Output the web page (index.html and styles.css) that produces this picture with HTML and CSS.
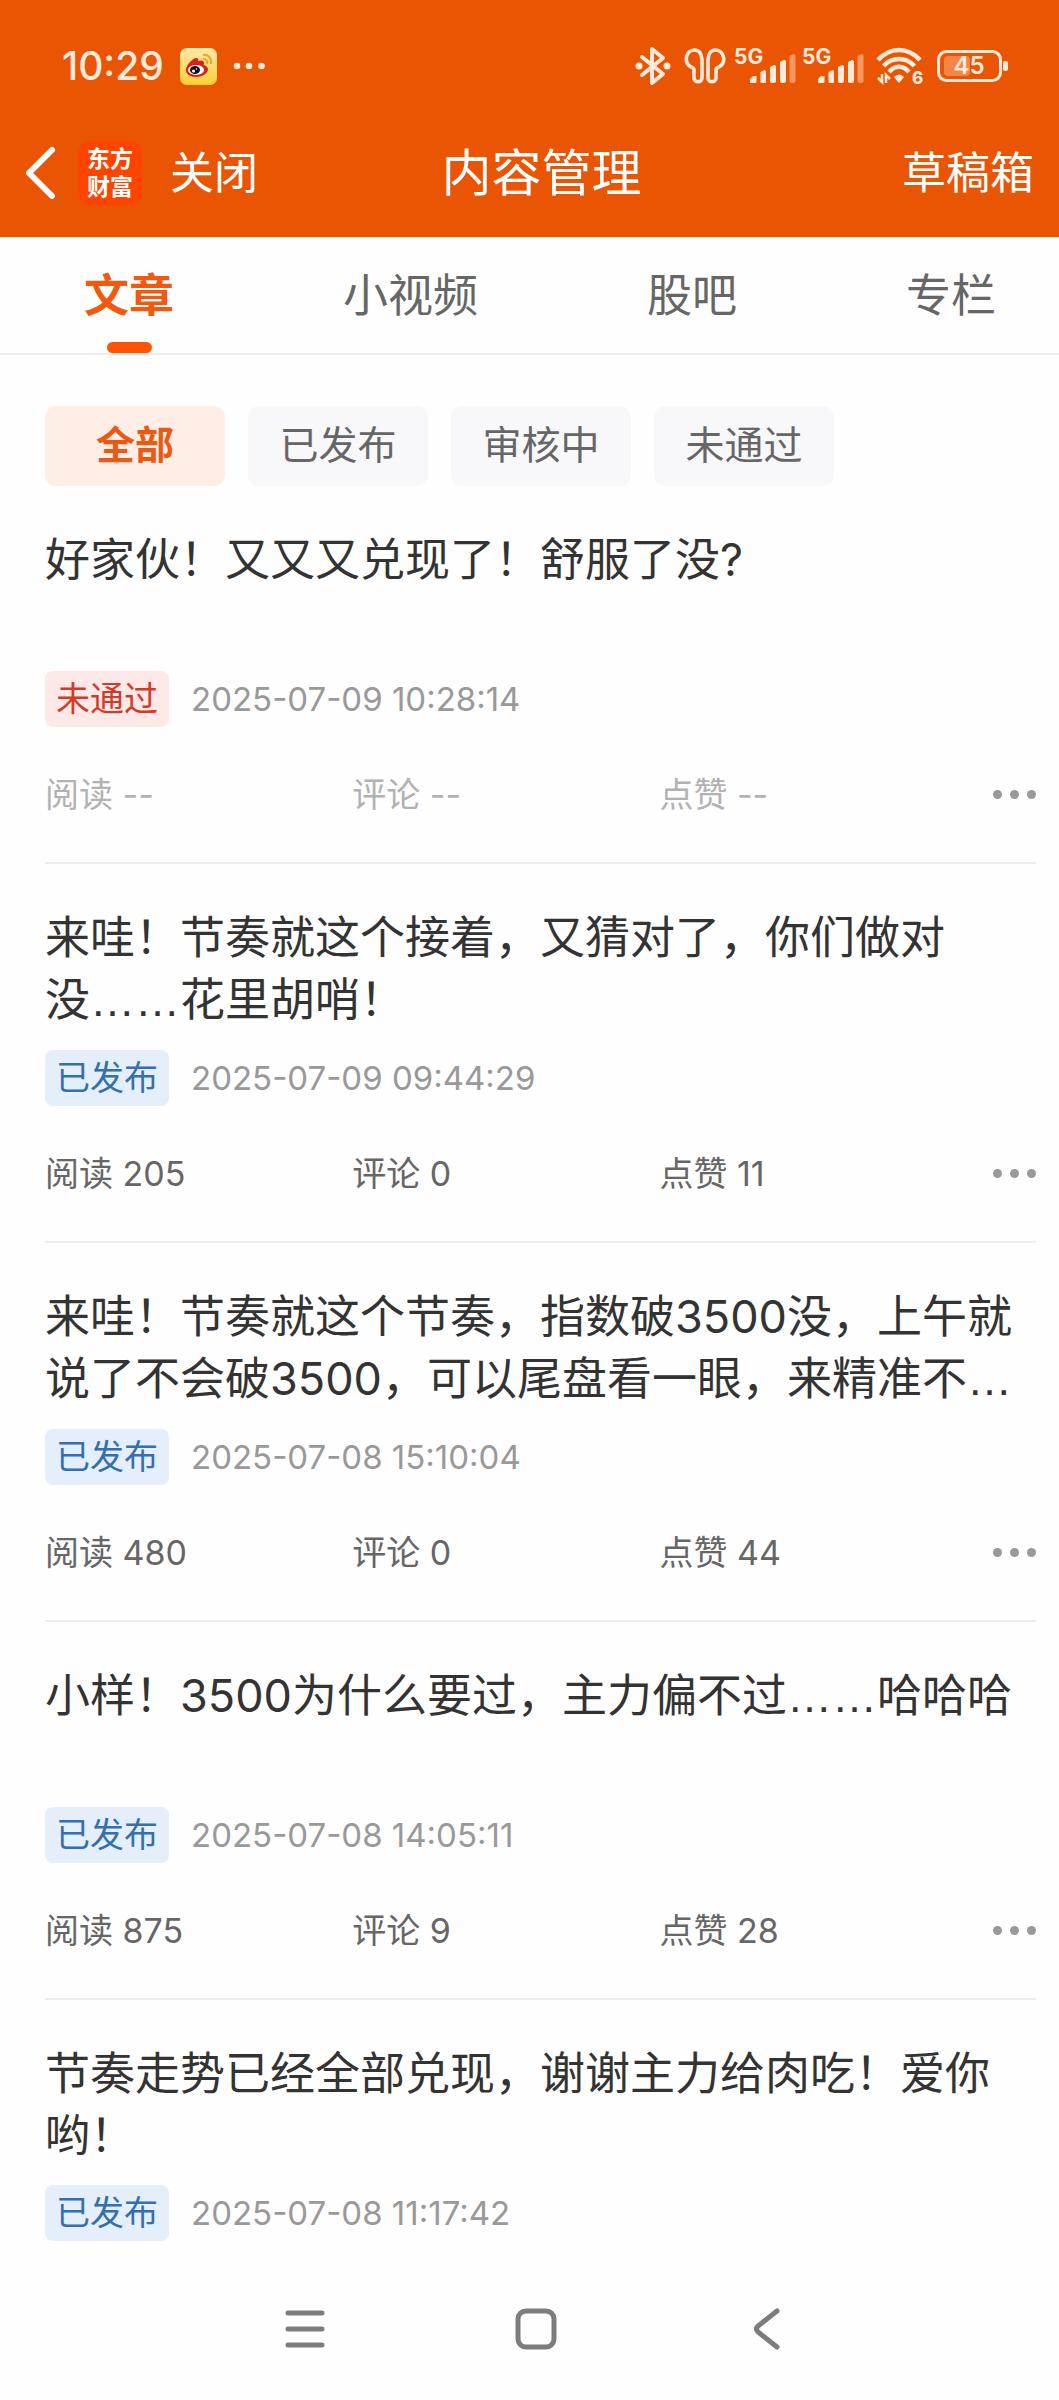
FILE: index.html
```html
<!DOCTYPE html>
<html lang="zh-CN">
<head>
    <meta charset="UTF-8">
    <meta name="viewport" content="width=device-width, initial-scale=1.0">
    <title>内容管理</title>
    <link rel="stylesheet" href="styles.css">
</head>
<body>
    <header class="header">
        <div class="status-bar">
            <div class="status-left">
                <span class="time">10:29</span>
                <svg class="weibo" width="37" height="37" viewBox="0 0 37 37">
                    <defs>
                        <linearGradient id="weibo-bg" x1="0" y1="0" x2="0" y2="1">
                            <stop offset="0" stop-color="#ffe9a8"/>
                            <stop offset="1" stop-color="#ffcf33"/>
                        </linearGradient>
                    </defs>
                    <rect width="37" height="37" rx="7" fill="url(#weibo-bg)"/>
                    <path d="M6 22c0-5 6-11 10-12 2 0 3 1 2 3 3-1 6-1 6 2 0 1-1 2 0 2 2 1 4 2 4 4 0 4-5 8-12 8-6 0-10-3-10-7z" fill="#d9201c"/>
                    <ellipse cx="16" cy="22" rx="8" ry="5" fill="#fff"/>
                    <ellipse cx="15" cy="22" rx="5" ry="4" fill="#111"/>
                    <circle cx="13.500" cy="23" r="1.500" fill="#fff"/>
                    <circle cx="16.500" cy="21" r="0.800" fill="#fff"/>
                    <path d="M23 7c5-1 9 3 8 9M23 11c3 0 5 2 4 5" fill="none" stroke="#e9a62c" stroke-width="2"/>
                </svg>
                <svg width="32" height="8" viewBox="0 0 32 8" fill="#ffe9db">
                    <circle cx="4" cy="4" r="3.300"/>
                    <circle cx="16" cy="4" r="3.300"/>
                    <circle cx="28.500" cy="4" r="3.300"/>
                </svg>
            </div>
            <div class="status-right">
                <svg class="bluetooth" width="36" height="40" viewBox="0 0 36 40">
                    <path d="M7 11l21 17-11 9V3l11 9L7 29" fill="none" stroke="#ffe9db" stroke-width="4" stroke-linejoin="round" stroke-linecap="round"/>
                    <circle cx="4" cy="20" r="3.500" fill="#ffe9db"/>
                    <circle cx="32" cy="20" r="3.500" fill="#ffe9db"/>
                </svg>
                <svg class="buds" width="42" height="36" viewBox="0 0 42 36" fill="none" stroke="#ffe9db" stroke-width="3.600" stroke-linejoin="round">
                    <path d="M18 12v18c0 5-8 5-8 0v-8c0-2-1-2-3-3-8-5-5-17 4-17 4 0 7 4 7 10z"/>
                    <path d="M24 12v18c0 5 8 5 8 0v-8c0-2 1-2 3-3 8-5 5-17-4-17-4 0-7 4-7 10z"/>
                </svg>
                <svg class="signal" width="62" height="52" viewBox="0 -8 62 52" fill="#ffe9db">
                    <text x="0" y="16" class="signal-text">5G</text>
                    <path d="M16 34v-3l3-3h3.500v6c0 1-1 1-1 1h-4.500c-1 0-1 0-1-1zM26.500 24l4-2q1.500 0 1.500 1.500V35h-4.500q-1 0-1-1zM36 19l4-2q2 0 2 1.500V33q0 2-2 2h-2q-2 0-2-2zM46 14l4-2q2 0 2 1.500V33q0 2-2 2h-2q-2 0-2-2z"/>
                    <path d="M55.500 8l4-2q2 0 2 1.500V33q0 2-2 2h-2q-2 0-2-2z" fill="#ff945c"/>
                </svg>
                <svg class="signal" width="62" height="52" viewBox="0 -8 62 52" fill="#ffe9db">
                    <text x="0" y="16" class="signal-text">5G</text>
                    <path d="M16 34v-3l3-3h3.500v6c0 1-1 1-1 1h-4.500c-1 0-1 0-1-1zM26.500 24l4-2q1.500 0 1.500 1.500V35h-4.500q-1 0-1-1zM36 19l4-2q2 0 2 1.500V33q0 2-2 2h-2q-2 0-2-2zM46 14l4-2q2 0 2 1.500V33q0 2-2 2h-2q-2 0-2-2z"/>
                    <path d="M55.500 8l4-2q2 0 2 1.500V33q0 2-2 2h-2q-2 0-2-2z" fill="#ff945c"/>
                </svg>
                <svg class="wifi" width="48" height="52" viewBox="0 -7 48 52">
                    <g fill="none" stroke="#ffe9db" stroke-width="4.500">
                        <path d="M2 13C14-.500 32-.500 44 13"/>
                        <path d="M7.500 19C16 9.500 30 9.500 38.500 19"/>
                        <path d="M13 25C19 18 27 18 33 25"/>
                    </g>
                    <path d="M18 30q5-5 10 0l-4 5q-1 1-2 0z" fill="#ffe9db"/>
                    <path d="M2 31l4 4V27M10 36V28l4 4" fill="none" stroke="#ffe9db" stroke-width="2.500"/>
                    <text x="36" y="37" class="wifi-text">6</text>
                </svg>
                <svg class="battery" width="72" height="32" viewBox="0 0 72 32">
                    <rect x="1.500" y="1.500" width="62" height="29" rx="8" fill="none" stroke="#ffe9db" stroke-width="3"/>
                    <rect x="7" y="6" width="26" height="20" rx="4" fill="#f58448"/>
                    <rect x="66" y="11" width="5" height="10" rx="2" fill="#ffe9db"/>
                    <text x="32" y="24" text-anchor="middle" class="battery-text">45</text>
                </svg>
            </div>
        </div>
        <nav class="title-bar">
            <div class="title-left">
                <button class="back" aria-label="返回">
                    <svg width="32" height="54" viewBox="0 0 32 54"><path d="M28 4L5 27l23 23" fill="none" stroke="#fff" stroke-width="6" stroke-linejoin="round" stroke-linecap="round"/></svg>
                </button>
                <span class="logo">东方<br>财富</span>
                <a class="bar-link" href="#">关闭</a>
            </div>
            <h1>内容管理</h1>
            <a class="bar-link drafts" href="#">草稿箱</a>
        </nav>
    </header>

    <nav class="tabs">
        <button class="tab active">文章</button>
        <button class="tab">小视频</button>
        <button class="tab">股吧</button>
        <button class="tab">专栏</button>
    </nav>

    <main class="content">
        <div class="filters">
            <button class="filter active">全部</button>
            <button class="filter">已发布</button>
            <button class="filter">审核中</button>
            <button class="filter">未通过</button>
        </div>

        <article class="post">
            <h2>好家伙！又又又兑现了！舒服了没?</h2>
            <div class="meta">
                <span class="badge rejected">未通过</span>
                <time>2025-07-09 10:28:14</time>
            </div>
            <div class="stats empty">
                <span>阅读 --</span>
                <span>评论 --</span>
                <span>点赞 --</span>
                <button class="more" aria-label="更多"><i></i><i></i><i></i></button>
            </div>
        </article>

        <article class="post">
            <h2>来哇！节奏就这个接着，又猜对了，你们做对没<span class="dots">……</span>花里胡哨！</h2>
            <div class="meta">
                <span class="badge">已发布</span>
                <time>2025-07-09 09:44:29</time>
            </div>
            <div class="stats">
                <span>阅读 205</span>
                <span>评论 0</span>
                <span>点赞 11</span>
                <button class="more" aria-label="更多"><i></i><i></i><i></i></button>
            </div>
        </article>

        <article class="post">
            <h2>来哇！节奏就这个节奏，指数破3500没，上午就说了不会破3500，可以尾盘看一眼，来精准不<span class="dots">…</span></h2>
            <div class="meta">
                <span class="badge">已发布</span>
                <time>2025-07-08 15:10:04</time>
            </div>
            <div class="stats">
                <span>阅读 480</span>
                <span>评论 0</span>
                <span>点赞 44</span>
                <button class="more" aria-label="更多"><i></i><i></i><i></i></button>
            </div>
        </article>

        <article class="post">
            <h2>小样！3500为什么要过，主力偏不过<span class="dots">……</span>哈哈哈</h2>
            <div class="meta">
                <span class="badge">已发布</span>
                <time>2025-07-08 14:05:11</time>
            </div>
            <div class="stats">
                <span>阅读 875</span>
                <span>评论 9</span>
                <span>点赞 28</span>
                <button class="more" aria-label="更多"><i></i><i></i><i></i></button>
            </div>
        </article>

        <article class="post">
            <h2>节奏走势已经全部兑现，谢谢主力给肉吃！爱你哟！</h2>
            <div class="meta">
                <span class="badge">已发布</span>
                <time>2025-07-08 11:17:42</time>
            </div>
        </article>
    </main>

    <footer class="system-nav">
        <button aria-label="菜单">
            <svg width="42" height="42" viewBox="0 0 42 42"><path d="M4 5h34M4 21h34M4 37h34" stroke="#7c7c7c" stroke-width="5" stroke-linecap="round"/></svg>
        </button>
        <button aria-label="主页">
            <svg width="42" height="42" viewBox="0 0 42 42"><rect x="3" y="3" width="36" height="36" rx="8" fill="none" stroke="#7c7c7c" stroke-width="5"/></svg>
        </button>
        <button aria-label="后退">
            <svg width="42" height="42" viewBox="0 0 42 42"><path d="M31 3L12 18Q9 21 12 24L31 39" fill="none" stroke="#7c7c7c" stroke-width="5" stroke-linecap="round"/></svg>
        </button>
    </footer>
</body>
</html>
```
FILE: styles.css
```css
* {
    box-sizing: border-box;
}
body {
    margin: 0;
    background-color: #fefefe;
    color: #333;
    font-family: Inter, "Noto Sans CJK SC", sans-serif;
}
button {
    padding: 0;
    border: none;
    background: none;
    color: inherit;
    font-family: inherit;
    cursor: pointer;
}
svg {
    display: block;
}
h1, h2 {
    margin: 0;
    font-weight: 400;
}

/* header */
.header {
    background-color: #ea5504;
    color: #fff;
}
.status-bar {
    display: flex;
    justify-content: space-between;
    align-items: center;
    height: 112px;
    padding: 20px 50px 0 62px;
}
.status-left, .status-right {
    display: flex;
    align-items: center;
}
.time {
    color: #ffe9db;
    font-size: 39px;
    font-weight: 500;
    line-height: 48px;
}
.weibo {
    margin: 0 16px;
}
.bluetooth, .wifi {
    margin-right: 13px;
}
.buds {
    margin-right: 8px;
}
.signal {
    margin-right: 6px;
}
.wifi {
    margin-left: 6px;
}
.signal-text {
    font-size: 21px;
    font-weight: 700;
}
.wifi-text {
    fill: #ffe9db;
    font-size: 17px;
    font-weight: 800;
}
.battery-text {
    fill: #ffe9db;
    font-size: 24px;
    font-weight: 600;
}
.title-bar {
    display: grid;
    grid-template-columns: 1fr auto 1fr;
    align-items: center;
    height: 125px;
    padding: 0 0 4px 24px;
}
.title-bar h1 {
    font-size: 50px;
    line-height: 64px;
}
.title-left {
    display: flex;
    align-items: center;
}
.logo {
    width: 64px;
    height: 64px;
    margin: 0 28px 0 22px;
    padding-top: 4px;
    border-radius: 12px;
    background-color: #ff4400;
    font-size: 23px;
    font-weight: 700;
    line-height: 28px;
    text-align: center;
}
.bar-link {
    color: #fff;
    font-size: 44px;
    line-height: 64px;
    text-decoration: none;
}
.drafts {
    justify-self: end;
    margin-right: 25px;
}

/* tabs */
.tabs {
    display: flex;
    justify-content: space-between;
    padding: 27px 63px 0 84px;
    border-bottom: 2px solid #ededed;
}
.tab {
    color: #666;
    font-size: 45px;
    line-height: 64px;
}
.tab::after {
    content: "";
    display: block;
    width: 45px;
    height: 11px;
    margin: 14px auto 0;
    border-radius: 6px;
}
.tab.active {
    color: #f0590f;
    font-weight: 700;
}
.tab.active::after {
    background-color: #ff5500;
}

/* filters */
.content {
    padding: 51px 23px 0 45px;
}
.filters {
    display: flex;
    gap: 23px;
}
.filter {
    width: 180px;
    height: 80px;
    padding-bottom: 8px;
    border-radius: 11px;
    background-color: #f8f8fb;
    color: #666;
    font-size: 39px;
}
.filter.active {
    background-color: #ffeee6;
    color: #ea5a14;
    font-weight: 700;
}

/* posts */
.post {
    padding: 43px 0 42px;
    border-bottom: 2px solid #ededed;
}
.post:last-child {
    border-bottom: none;
}
.post h2 {
    min-height: 124px;
    font-size: 45px;
    line-height: 62px;
}
.dots {
    font-family: "Liberation Sans", sans-serif;
}
.meta {
    display: flex;
    align-items: center;
    gap: 22px;
    margin-top: 18px;
}
.badge {
    padding: 0 11px;
    border-radius: 8px;
    background-color: #e4effb;
    color: #346fae;
    font-size: 34px;
    line-height: 56px;
}
.badge.rejected {
    background-color: #ffe9e8;
    color: #d23a2a;
}
.meta time {
    color: #999;
    font-size: 33px;
    line-height: 56px;
}
.stats {
    display: grid;
    grid-template-columns: 31% 31% 1fr auto;
    align-items: center;
    margin-top: 42px;
    color: #666;
    font-size: 34px;
    line-height: 51px;
}
.stats.empty {
    color: #b2b2b2;
}
.more {
    display: flex;
    gap: 8px;
}
.more i {
    width: 9px;
    height: 9px;
    border-radius: 50%;
    background-color: #999;
}

/* system navigation */
.system-nav {
    display: flex;
    justify-content: center;
    gap: 189px;
    padding: 25px 0 50px 12px;
}
```
